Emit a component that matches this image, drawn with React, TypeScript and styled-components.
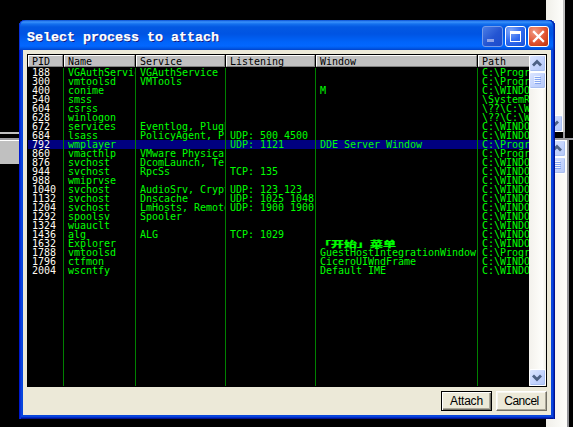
import React from "react";
import styled, { createGlobalStyle, css } from "styled-components";

const Global = createGlobalStyle`
  * { box-sizing: border-box; }
  body { margin: 0; background: #000; overflow: hidden; }
`;

const Desktop = styled.div`
  position: relative;
  width: 573px;
  height: 427px;
  overflow: hidden;
  background: #000;
`;

const BackStrip = styled.div`
  position: absolute;
  left: 0;
  top: 132px;
  width: 19px;
  height: 32px;
  background: linear-gradient(#c0c0c0 0 2px, #000 2px 6px, #9d9da1 6px 8px, #fff 8px 9px, #c0c0c0 9px);
`;

const BackPane = styled.div<{ $top: number; $height: number; $width: number; $lower?: boolean }>`
  position: absolute;
  left: 546px;
  top: ${(p) => p.$top}px;
  width: ${(p) => p.$width}px;
  height: ${(p) => p.$height}px;
  display: flex;
  flex-direction: column;
  align-items: flex-end;
  justify-content: ${(p) => (p.$lower ? "flex-start" : "flex-end")};
  padding-right: ${(p) => (p.$lower ? 1 : 0)}px;
  background: linear-gradient(90deg, #f0efe9, #fefefb);
  border-right: 2px solid ${(p) => (p.$lower ? "#96969a" : "#c0c0c0")};
`;

const Rule = styled.div`
  position: absolute;
  left: 555px;
  top: 138px;
  width: 18px;
  height: 2px;
  background: #9d9da1;
`;

const Stub = styled.div`
  position: absolute;
  left: 563px;
  top: 132px;
  width: 2px;
  height: 6px;
  background: #9d9da1;
`;

const Dialog = styled.section`
  position: absolute;
  left: 19px;
  top: 20px;
  width: 536px;
  height: 399px;
  display: flex;
  flex-direction: column;
  padding: 0 4px 4px;
  border-radius: 6px 6px 0 0;
  background: #0846dc;
  box-shadow: inset 1px 0 #0019cf, inset 2px 0 #0a32d8, inset -1px 0 #00138c, inset -2px 0 #0029c4,
    inset 0 -1px #00138c, inset 0 -2px #0029c4;
`;

const TitleBar = styled.header`
  display: flex;
  flex: none;
  align-items: center;
  height: 30px;
  margin: 0 -4px;
  padding: 3px 6px 0 8px;
  gap: 2px;
  border-radius: 6px 6px 0 0;
  background: linear-gradient(#0a4fd2 0, #3a92fb 2px, #1470ee 4px, #0358e2 7px, #0054e3 14px, #0064fa 22px, #0267ff 26px, #015ae8 28px, #0042cc 30px);
  box-shadow: inset 1px 0 #0831d9, inset -1px 0 #0023a8, inset -2px 0 #0339c8;
`;

const Title = styled.h1`
  flex: 1;
  margin: 0;
  padding-top: 2px;
  color: #fff;
  font: bold 13.33px/20px "Liberation Mono", monospace;
  text-shadow: 1px 1px #0a1883;
  white-space: pre;
  -webkit-text-stroke: 0.25px #fff;
`;

type CaptionKind = "min" | "max" | "close";

const CaptionButton = styled.div<{ $kind: CaptionKind }>`
  width: 21px;
  height: 21px;
  border: 1px solid ${(p) => (p.$kind === "min" ? "#769ce9" : "#fff")};
  border-radius: 3px;
  ${(p) =>
    p.$kind === "close"
      ? css`background: radial-gradient(circle at 30% 25%, #f09a82, #e25432 55%, #bb3107);`
      : p.$kind === "max"
        ? css`background: radial-gradient(circle at 25% 20%, #82a8f7, #316af0 50%, #1550d5);`
        : css`background: linear-gradient(135deg, #4a7de5, #2354d2 55%, #1d4ccc);`}
  svg { display: block; }
`;

const Client = styled.div`
  display: flex;
  flex: 1;
  flex-direction: column;
  padding: 4px;
  background: #ece9d8;
`;

const ListBox = styled.div`
  display: flex;
  height: 333px;
  border: 1px solid #000;
  background: #000;
`;

const columns = "36px 72px 90px 90px 162px 51px";

const Table = styled.div`
  display: flex;
  flex-direction: column;
  width: 501px;
  font: 10px/9px "DejaVu Sans Mono", "Noto Sans CJK SC", monospace;
  letter-spacing: -0.02px;
`;

const HeaderRow = styled.div`
  display: grid;
  grid-template-columns: ${columns};
  height: 13px;
  padding-bottom: 1px;
`;

const HeaderCell = styled.div`
  margin-right: 1px;
  padding: 2px 0 0 3px;
  color: #000;
  white-space: pre;
  background: #c0c0c0;
  border: 1px solid;
  border-color: #fff #808080 #808080 #fff;
  line-height: 8px;
  &:last-child { margin-right: 0; border-right: 0; }
`;

const lines = [35, 107, 197, 287, 449];

const Body = styled.div`
  flex: 1;
  background: ${lines
    .map((x) => `linear-gradient(#008000, #008000) ${x}px 0 / 1px 100% no-repeat`)
    .join(", ")};
`;

const Row = styled.div<{ $selected: boolean }>`
  display: grid;
  grid-template-columns: ${columns};
  height: 9px;
  background: ${(p) => (p.$selected ? "#000080" : "transparent")};
`;

const Cell = styled.div<{ $pid?: boolean }>`
  overflow-x: clip;
  overflow-y: visible;
  height: 9px;
  padding-left: 4px;
  white-space: pre;
  color: ${(p) => (p.$pid ? "#fffbf0" : "#00ff00")};
  border-right: 1px solid #008000;
  &:last-child { border-right: 0; }
`;

const WideText = styled.span`
  display: block;
  margin-left: -2px;
  font: 900 13px/9px "Noto Sans CJK SC", sans-serif;
  transform: scaleY(0.6);
  -webkit-text-stroke: 0.3px #00ff00;
`;

const ScrollBar = styled.div`
  display: flex;
  flex-direction: column;
  width: 17px;
  background: linear-gradient(90deg, #f3f1ec, #fefefb 80%, #eeede5);
`;

const ScrollPart = styled.div`
  flex: none;
  width: 17px;
  height: 17px;
  border: 1px solid #fff;
  border-radius: 2px;
  background: linear-gradient(135deg, #dbe5ff, #c3d3fd 55%, #b5c8f7);
  box-shadow: inset -1px -1px #a9bff0;
  svg { display: block; }
`;

const Track = styled.div`
  flex: 1;
`;

const Actions = styled.div`
  display: flex;
  justify-content: flex-end;
  gap: 4px;
  padding-top: 4px;
`;

const Button = styled.button<{ $primary?: boolean }>`
  width: 51px;
  height: 20px;
  padding: 0;
  color: #000;
  font: 12px/15px "Liberation Sans", sans-serif;
  letter-spacing: -0.45px;
  background: #ece9d8;
  border: 1px solid;
  border-color: #fff #716f64 #716f64 #fff;
  box-shadow: inset -1px -1px #aca899, inset 1px 1px #f8f7f0;
  ${(p) =>
    p.$primary &&
    css`
      border-color: #000;
      box-shadow: inset 1px 1px #fff, inset -1px -1px #716f64, inset -2px -2px #aca899;
      letter-spacing: -0.2px;
    `}
`;

const Chevron = ({ down = false }: { down?: boolean }) => (
  <ScrollPart>
    <svg width="15" height="15" viewBox="0 0 15 15">
      <path d={down ? "M3 5.5 7 9.5l4-4" : "M3 9.5 7 5.5l4 4"} fill="none" stroke="#4d6185" strokeWidth="2.8" />
    </svg>
  </ScrollPart>
);

const Thumb = () => (
  <ScrollPart>
    <svg width="15" height="15" shapeRendering="crispEdges">
      <path d="M4 3.5h6M4 5.5h6M4 7.5h6M4 9.5h6" stroke="#f2f6ff" />
      <path d="M5 4.5h6M5 6.5h6M5 8.5h6M5 10.5h6" stroke="#86a6f0" />
    </svg>
  </ScrollPart>
);

const prog = "C:\\Progr";
const win = "C:\\WINDO";

const processes: string[][] = [
  ["188", "VGAuthServic", "VGAuthService", "", "", prog],
  ["300", "vmtoolsd", "VMTools", "", "", prog],
  ["400", "conime", "", "", "M", win],
  ["540", "smss", "", "", "", "\\SystemR"],
  ["604", "csrss", "", "", "", "\\??\\C:\\W"],
  ["628", "winlogon", "", "", "", "\\??\\C:\\W"],
  ["672", "services", "Eventlog, PlugP", "", "", win],
  ["684", "lsass", "PolicyAgent, Pr", "UDP: 500 4500", "", win],
  ["792", "wmplayer", "", "UDP: 1121", "DDE Server Window", prog],
  ["860", "vmacthlp", "VMware Physica", "", "", prog],
  ["876", "svchost", "DcomLaunch, Ter", "", "", win],
  ["944", "svchost", "RpcSs", "TCP: 135", "", win],
  ["988", "wmiprvse", "", "", "", win],
  ["1040", "svchost", "AudioSrv, Crypt", "UDP: 123 123", "", win],
  ["1132", "svchost", "Dnscache", "UDP: 1025 1048", "", win],
  ["1204", "svchost", "LmHosts, Remote", "UDP: 1900 1900", "", win],
  ["1292", "spoolsv", "Spooler", "", "", win],
  ["1324", "wuauclt", "", "", "", win],
  ["1436", "alg", "ALG", "TCP: 1029", "", win],
  ["1632", "Explorer", "", "", "「开始」菜单", win],
  ["1788", "vmtoolsd", "", "", "GuestHostIntegrationWindow", prog],
  ["1796", "ctfmon", "", "", "CiceroUIWndFrame", win],
  ["2004", "wscntfy", "", "", "Default IME", win],
];

export default function App() {
  return (
    <>
      <Global />
      <Desktop>
        <BackStrip />
        <BackPane $top={0} $height={132} $width={19}>
          <Chevron down />
        </BackPane>
        <Stub />
        <BackPane $top={140} $height={287} $width={23} $lower>
          <Chevron />
          <Thumb />
        </BackPane>
        <Rule />
        <Dialog>
          <TitleBar>
            <Title>Select process to attach</Title>
            <CaptionButton $kind="min">
              <svg width="19" height="19" shapeRendering="crispEdges">
                <path d="M4 12h7v3H4z" fill="#8ea3e8" />
              </svg>
            </CaptionButton>
            <CaptionButton $kind="max">
              <svg width="19" height="19" shapeRendering="crispEdges">
                <path d="M4.5 5v9.5h10V5" fill="none" stroke="#fff" />
                <path d="M4 4h11v3H4z" fill="#fff" />
              </svg>
            </CaptionButton>
            <CaptionButton $kind="close">
              <svg width="19" height="19">
                <path d="m5 5 9 9M14 5l-9 9" stroke="#fff" strokeWidth="2.3" strokeLinecap="square" />
              </svg>
            </CaptionButton>
          </TitleBar>
          <Client>
            <ListBox>
              <Table>
                <HeaderRow>
                  {["PID", "Name", "Service", "Listening", "Window", "Path"].map((h) => (
                    <HeaderCell key={h}>{h}</HeaderCell>
                  ))}
                </HeaderRow>
                <Body>
                  {processes.map((p) => (
                    <Row key={p[0]} $selected={p[0] === "792"}>
                      {p.map((text, i) => (
                        <Cell key={i} $pid={i === 0}>
                          {text.startsWith("「") ? <WideText>{text}</WideText> : text}
                        </Cell>
                      ))}
                    </Row>
                  ))}
                </Body>
              </Table>
              <ScrollBar>
                <Chevron />
                <Thumb />
                <Track />
                <Chevron down />
              </ScrollBar>
            </ListBox>
            <Actions>
              <Button $primary>Attach</Button>
              <Button>Cancel</Button>
            </Actions>
          </Client>
        </Dialog>
      </Desktop>
    </>
  );
}
